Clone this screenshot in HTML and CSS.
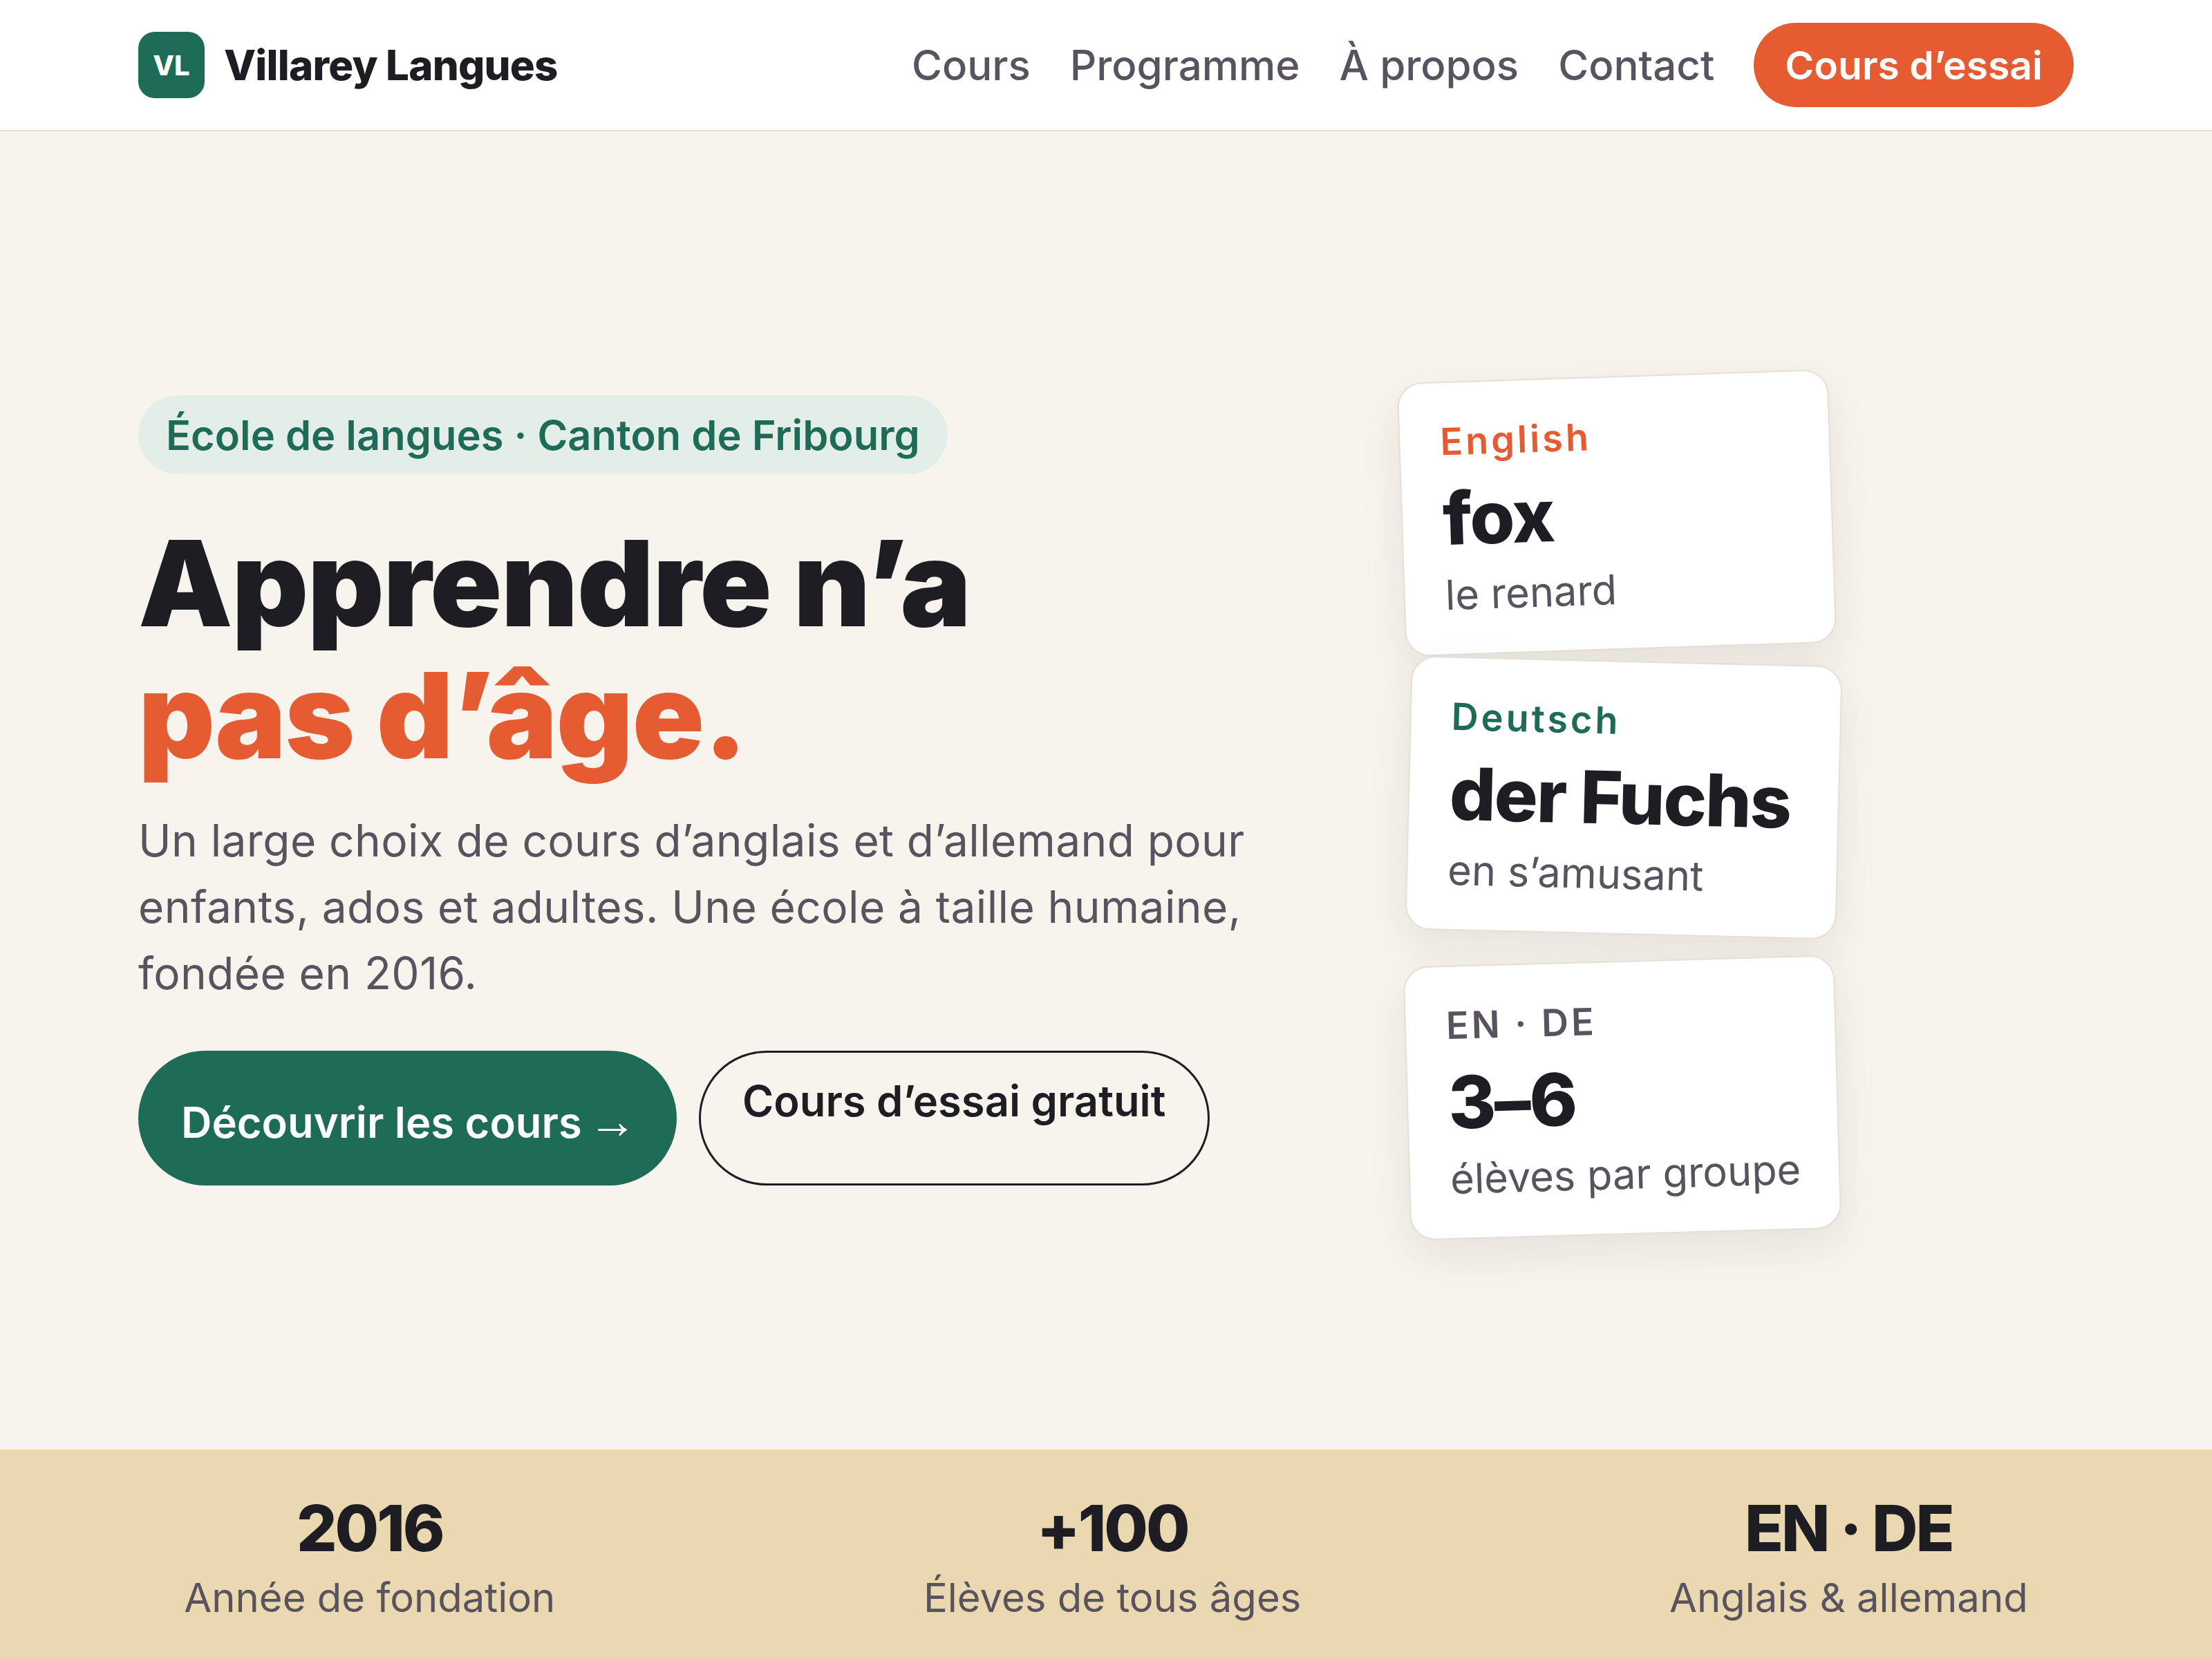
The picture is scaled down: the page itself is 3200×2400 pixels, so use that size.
FILE: index.html
```html
<!DOCTYPE html>
<html lang="fr">
<head>
  <meta charset="UTF-8">
  <meta name="viewport" content="width=device-width, initial-scale=1.0">
  <title>Villarey Langues</title>
  <link rel="stylesheet" href="styles.css">
</head>
<body>
  <header class="nav">
    <a class="brand" href="#">
      <span class="brand-mark">VL</span>
      <span class="brand-name">Villarey Langues</span>
    </a>
    <nav class="nav-links">
      <a href="#">Cours</a>
      <a href="#">Programme</a>
      <a href="#">À propos</a>
      <a href="#">Contact</a>
      <a class="nav-cta" href="#">Cours d’essai</a>
    </nav>
  </header>

  <main class="hero">
    <div class="hero-text">
      <span class="badge">École de langues · Canton de Fribourg</span>
      <h1>Apprendre n’a<br><em>pas d’âge.</em></h1>
      <p>Un large choix de cours d’anglais et d’allemand pour enfants, ados et adultes. Une école à taille humaine, fondée en 2016.</p>
      <div class="hero-actions">
        <a class="btn btn-primary" href="#">Découvrir les cours <span class="arrow">→</span></a>
        <a class="btn btn-outline" href="#">Cours d’essai gratuit</a>
      </div>
    </div>
    <div class="cards">
      <div class="card card-en">
        <div class="card-label orange">English</div>
        <div class="card-word">fox</div>
        <div class="card-sub">le renard</div>
      </div>
      <div class="card card-de">
        <div class="card-label green">Deutsch</div>
        <div class="card-word">der Fuchs</div>
        <div class="card-sub">en s’amusant</div>
      </div>
      <div class="card card-group">
        <div class="card-label">EN · DE</div>
        <div class="card-word">3–6</div>
        <div class="card-sub">élèves par groupe</div>
      </div>
    </div>
  </main>

  <section class="stats">
    <div class="stat">
      <div class="stat-value">2016</div>
      <div class="stat-label">Année de fondation</div>
    </div>
    <div class="stat">
      <div class="stat-value">+100</div>
      <div class="stat-label">Élèves de tous âges</div>
    </div>
    <div class="stat">
      <div class="stat-value">EN · DE</div>
      <div class="stat-label">Anglais &amp; allemand</div>
    </div>
  </section>
</body>
</html>
```

FILE: styles.css
```css
* {
  box-sizing: border-box;
}

body {
  margin: 0;
  height: 2400px;
  display: flex;
  flex-direction: column;
  font-family: Inter, sans-serif;
  color: #1f1d24;
  background-color: #f7f4ed;
  overflow: hidden;
}

a {
  color: inherit;
  text-decoration: none;
}

.nav {
  height: 190px;
  flex: none;
  display: flex;
  align-items: center;
  justify-content: space-between;
  padding: 0 200px;
  background-color: #fff;
  border-bottom: 2px solid #e5dfd4;
}

.brand {
  display: flex;
  align-items: center;
  gap: 28px;
}

.brand-mark {
  width: 96px;
  height: 96px;
  display: flex;
  align-items: center;
  justify-content: center;
  border-radius: 24px;
  background-color: #1e6b57;
  color: #fff;
  font-size: 40px;
  font-weight: 800;
}

.brand-name {
  font-size: 60px;
  font-weight: 800;
  letter-spacing: -0.8px;
}

.nav-links {
  display: flex;
  align-items: center;
  gap: 57px;
  font-size: 60px;
  font-weight: 500;
  color: #58535f;
}

.nav-cta {
  height: 122px;
  display: flex;
  align-items: center;
  padding: 0 45px;
  border-radius: 61px;
  background-color: #e55c33;
  color: #fff;
  font-size: 57px;
  font-weight: 600;
}

.hero {
  flex: 1;
  display: grid;
  grid-template-columns: 1fr 624px;
  align-items: center;
  padding: 0 541px 0 200px;
}

.badge {
  display: inline-block;
  height: 114px;
  line-height: 114px;
  padding: 0 40px;
  border-radius: 57px;
  background-color: #e4eee8;
  color: #1e6b57;
  font-size: 59.6px;
  font-weight: 600;
}

h1 {
  margin: 62px 0 0;
  font-size: 172px;
  font-weight: 900;
  line-height: 191px;
  letter-spacing: -1.5px;
}

h1 em {
  font-style: normal;
  color: #e55c33;
}

.hero-text p {
  margin: 38px 0 0;
  width: 1640px;
  font-size: 64px;
  line-height: 96px;
  letter-spacing: 0.4px;
  color: #58535f;
}

.hero-actions {
  display: flex;
  gap: 32px;
  margin-top: 64px;
}

.btn {
  height: 195px;
  border-radius: 98px;
  font-size: 61.5px;
  font-weight: 600;
  white-space: nowrap;
}

.btn-primary {
  width: 779px;
  padding: 66px 0 0 62px;
  background-color: #1e6b57;
  color: #fff;
}

.btn-outline {
  width: 739px;
  padding: 32px 0 0 60px;
  border: 3px solid #1f1d24;
}

.arrow {
  margin-left: -6px;
  font-family: "Open Sans", sans-serif;
  font-size: 70px;
  font-weight: 400;
  line-height: 0;
}

.cards {
  display: flex;
  flex-direction: column;
  gap: 34px;
}

.card {
  height: 396px;
  padding: 53px 58px;
  border: 2px solid #e5dfd4;
  border-radius: 36px;
  background-color: #fff;
  box-shadow: 0 24px 64px rgba(31, 29, 36, 0.08);
}

.card-en {
  transform: translate(-8px, 28px) rotate(-1.9deg);
}

.card-de {
  transform: translate(2px, 10px) rotate(1.4deg);
}

.card-group {
  transform: translate(0, 14px) rotate(-1.6deg);
}

.card-label {
  font-size: 54px;
  font-weight: 600;
  line-height: 64px;
  letter-spacing: 4px;
  color: #58535f;
}

.orange {
  color: #e55c33;
}

.green {
  color: #1e6b57;
}

.card-word {
  margin-top: 11px;
  font-size: 105px;
  font-weight: 800;
  line-height: 136px;
  letter-spacing: -2px;
}

.card-sub {
  margin-top: 6px;
  font-size: 59.5px;
  line-height: 72px;
  color: #58535f;
  white-space: nowrap;
}

.stats {
  height: 303px;
  flex: none;
  display: flex;
  justify-content: space-around;
  padding-top: 56px;
  background-color: #ead8b0;
  text-align: center;
}

.stat-value {
  font-size: 92px;
  font-weight: 800;
  line-height: 116px;
  letter-spacing: -3px;
}

.stat-label {
  margin-top: 4px;
  font-size: 58px;
  line-height: 76px;
  color: #58535f;
}
```
